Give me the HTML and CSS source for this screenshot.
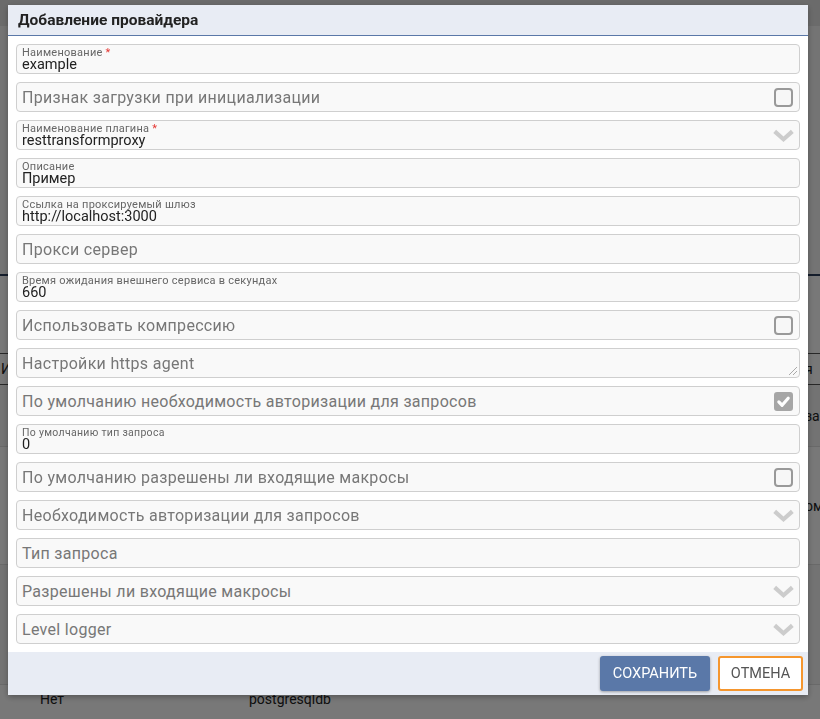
FILE: index.html
```html
<!DOCTYPE html>
<html lang="ru">
<head>
<meta charset="utf-8">
<title>Добавление провайдера</title>
<link rel="stylesheet" href="styles.css">
</head>
<body>
<div class="page">
  <div class="topbar"></div>
  <div class="toolbar"></div>
  <div class="tline"></div>
  <div class="spacer1"></div>
  <div class="thead"><span class="c1">И</span><span class="c3">я</span></div>
  <div class="trow r1"><span class="c1"></span><span class="c3">зап</span></div>
  <div class="trow r2"><span class="c1"></span><span class="c3">ом</span></div>
  <div class="trow r3"><span class="c1"></span><span class="c3"></span></div>
  <div class="trow r4"><span class="c1">Нет</span><span class="c2">postgresqldb</span></div>
</div>
<div class="overlay"></div>
<div class="modal">
  <div class="modal-head">Добавление провайдера</div>
  <div class="modal-body">
    <div class="field filled"><div class="lbl">Наименование <span class="req">*</span></div><div class="val">example</div></div>
    <div class="field plain"><span class="ph">Признак загрузки при инициализации</span><span class="cb"></span></div>
    <div class="field filled sel"><div class="lbl">Наименование плагина <span class="req">*</span></div><div class="val">resttransformproxy</div><svg class="chev" viewBox="0 0 24 14"><path d="M2.5 2.5 L12 11 L21.5 2.5"/></svg></div>
    <div class="field filled"><div class="lbl">Описание</div><div class="val">Пример</div></div>
    <div class="field filled"><div class="lbl">Ссылка на проксируемый шлюз</div><div class="val">http://localhost:3000</div></div>
    <div class="field plain"><span class="ph">Прокси сервер</span></div>
    <div class="field filled"><div class="lbl">Время ожидания внешнего сервиса в секундах</div><div class="val">660</div></div>
    <div class="field plain"><span class="ph">Использовать компрессию</span><span class="cb"></span></div>
    <div class="field plain area"><span class="ph">Настройки https agent</span><svg class="grip" viewBox="0 0 12 12"><path d="M11 3 L3 11 M11 7 L7 11"/></svg></div>
    <div class="field plain"><span class="ph">По умолчанию необходимость авторизации для запросов</span><span class="cb on"><svg viewBox="0 0 16 16"><path d="M3 8.5 L6.5 12 L13 4.5"/></svg></span></div>
    <div class="field filled"><div class="lbl sm">По умолчанию тип запроса</div><div class="val">0</div></div>
    <div class="field plain"><span class="ph">По умолчанию разрешены ли входящие макросы</span><span class="cb"></span></div>
    <div class="field plain sel"><span class="ph">Необходимость авторизации для запросов</span><svg class="chev" viewBox="0 0 24 14"><path d="M2.5 2.5 L12 11 L21.5 2.5"/></svg></div>
    <div class="field plain"><span class="ph">Тип запроса</span></div>
    <div class="field plain sel"><span class="ph">Разрешены ли входящие макросы</span><svg class="chev" viewBox="0 0 24 14"><path d="M2.5 2.5 L12 11 L21.5 2.5"/></svg></div>
    <div class="field plain sel"><span class="ph">Level logger</span><svg class="chev" viewBox="0 0 24 14"><path d="M2.5 2.5 L12 11 L21.5 2.5"/></svg></div>
  </div>
  <div class="modal-foot">
    <button class="btn save">СОХРАНИТЬ</button>
    <button class="btn cancel">ОТМЕНА</button>
  </div>
</div>
</body>
</html>
```

FILE: styles.css
```css
* { box-sizing: border-box; }
html, body { margin: 0; padding: 0; }
body {
  width: 820px;
  height: 719px;
  overflow: hidden;
  font-family: Roboto, "Noto Sans", sans-serif;
  background: #fff;
}
.page { width: 820px; color: #222; font-size: 14px; }
.topbar { height: 26px; background: #e4e4e4; }
.toolbar { height: 248px; background: #f6f6f6; }
.tline { height: 2px; background: #2c3e5c; }
.spacer1 { height: 77px; background: #fff; }
.thead { height: 32px; display: flex; align-items: center; border-top: 1px solid #555; border-bottom: 1px solid #555; background: #fff; }
.trow { display: flex; align-items: center; border-bottom: 1px solid #e0e0e0; }
.trow.r1 { height: 62px; background: #f5f5f5; }
.trow.r2 { height: 118px; background: #fff; }
.trow.r3 { height: 120px; background: #f5f5f5; }
.trow.r4 { height: 40px; background: #fff; align-items: flex-start; padding-top: 6px; }
.c1 { width: 249px; padding-left: 40px; flex: none; }
.thead .c1 { padding-left: 1px; }
.c2 { width: 556px; flex: none; }
.c3 { margin-left: auto; width: 15px; flex: none; overflow: hidden; white-space: nowrap; }

.overlay { position: fixed; inset: 0; background: rgba(0, 0, 0, 0.53); }

.modal {
  position: fixed;
  left: 8px;
  top: 5px;
  width: 800px;
  height: 690px;
  background: #fff;
  display: flex;
  flex-direction: column;
  box-shadow: 0 2px 6px rgba(0,0,0,0.3);
}
.modal-head {
  height: 31px;
  background: #e8ecf4;
  border-bottom: 1px solid #5a78a8;
  padding: 4px 10px 0;
  font-size: 15.5px;
  font-weight: 700;
  color: #222;
  line-height: 22px;
}
.modal-body {
  flex: 1;
  padding: 8px 8px 0;
  display: flex;
  flex-direction: column;
  gap: 8px;
}
.field {
  height: 30px;
  background: #f9f9f9;
  border: 1px solid #cfcfcf;
  border-radius: 4px;
  position: relative;
  padding: 0 5px;
  flex: none;
}
.field.plain { display: flex; align-items: center; }
.ph { font-size: 16px; letter-spacing: 0.3px; color: #777; }
.lbl {
  font-size: 11px;
  letter-spacing: 0.25px;
  color: #666;
  line-height: 11px;
  padding-top: 2px;
}
.lbl.sm { font-size: 10.5px; letter-spacing: 0.3px; }
.req { color: #e53935; }
.val { font-size: 14.5px; color: #222; line-height: 14px; }
.cb {
  margin-left: auto;
  margin-right: 1px;
  width: 19px;
  height: 19px;
  border: 2px solid #999;
  border-radius: 4px;
  background: #f7f7f7;
}
.cb.on { background: #a6a6a6; border-color: #a6a6a6; border-radius: 3px; }
.cb.on svg { width: 15px; height: 15px; display: block; }
.cb.on path { fill: none; stroke: #fff; stroke-width: 3.4; stroke-linecap: round; stroke-linejoin: round; }
.chev {
  position: absolute;
  right: 4px;
  top: 8px;
  width: 23px;
  height: 13px;
}
.chev path { fill: none; stroke: #cccccc; stroke-width: 4.5; stroke-linejoin: miter; }
.grip { position: absolute; right: 1px; bottom: 1px; width: 12px; height: 12px; }
.grip path { stroke: #aaa; stroke-width: 1; fill: none; }

.modal-foot {
  height: 43px;
  background: #e8ecf4;
  display: flex;
  justify-content: flex-end;
  align-items: center;
  gap: 8px;
  padding-right: 5px;
}
.btn {
  height: 35px;
  font-family: inherit;
  font-size: 14.5px;
  border-radius: 3px;
  padding: 0;
  cursor: pointer;
}
.btn.save {
  width: 110px;
  background: #5a78a8;
  color: #fff;
  border: none;
  box-shadow: 0 1px 3px rgba(0,0,0,0.35);
}
.btn.cancel {
  width: 85px;
  background: #fff;
  color: #555;
  border: 2px solid #f5962e;
}
```
